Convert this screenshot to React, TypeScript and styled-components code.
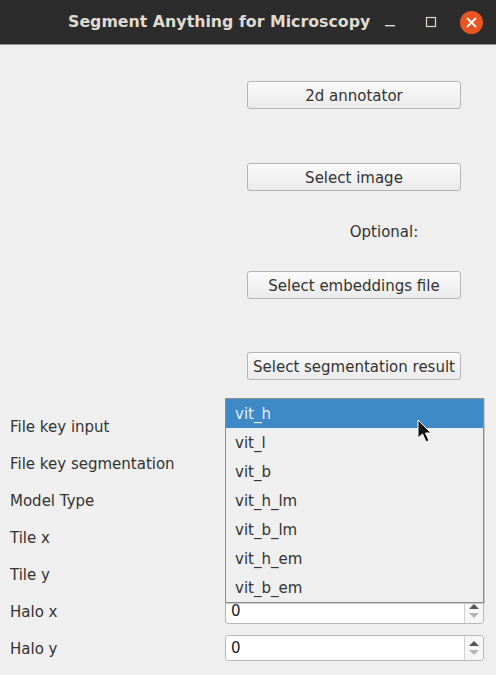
import React from "react";
import styled, { createGlobalStyle } from "styled-components";

const Global = createGlobalStyle`
  html, body { margin: 0; padding: 0; background: #efefef; }
  body { font-family: "DejaVu Sans", sans-serif; }
  * { box-sizing: border-box; }
`;

const Window = styled.div`
  width: 496px;
  height: 675px;
  background: #efefef;
  position: relative;
  overflow: hidden;
`;

const TitleBar = styled.div`
  height: 45px;
  background: #2d2c2c;
  border-bottom: 1px solid #9a9a9a;
  display: flex;
  align-items: center;
  padding-left: 68px;
  color: #dfdbd2;
`;

const Title = styled.div`
  font-family: "DejaVu Sans", sans-serif;
  font-weight: bold;
  font-size: 15.8px;
  flex: 1;
  margin-top: -1px;
  white-space: nowrap;
`;

const Controls = styled.div`
  display: flex;
  align-items: center;
  padding-right: 10px;
`;

const CtrlBtn = styled.div<{ $w: number }>`
  width: ${(p) => p.$w}px;
  height: 24px;
  display: flex;
  align-items: center;
  justify-content: center;
`;

const CloseCircle = styled.div`
  width: 23px;
  height: 23px;
  border-radius: 50%;
  background: #e95420;
  display: flex;
  align-items: center;
  justify-content: center;
`;

const Body = styled.div`
  display: grid;
  grid-template-columns: 215px 259px;
  padding: 0 12px 0 10px;
`;

const TopColumn = styled.div`
  grid-column: 2;
  display: flex;
  flex-direction: column;
  align-items: center;
  padding-top: 36px;
`;

const PushButton = styled.button<{ $mt: number }>`
  margin-top: ${(p) => p.$mt}px;
  width: 214px;
  height: 28px;
  border: 1px solid #b4b4b4;
  border-radius: 3px;
  background: linear-gradient(#fafafa, #ebebeb);
  font-family: "DejaVu Sans", sans-serif;
  font-size: 15px;
  color: #333;
  padding: 2px 0 0 0;
  white-space: nowrap;
  margin-left: -1px;
`;

const Optional = styled.div`
  margin-top: 31px;
  margin-left: 59px;
  font-size: 15px;
  color: #333;
  height: 18px;
  line-height: 20px;
`;

const Form = styled.div`
  grid-column: 1 / span 2;
  display: grid;
  grid-template-columns: 215px 259px;
  row-gap: 11px;
  margin-top: 33px;
  position: relative;
`;

const Label = styled.div`
  height: 26px;
  line-height: 28px;
  font-size: 15px;
  color: #333;
  white-space: nowrap;
`;

const Field = styled.div`
  height: 26px;
  display: flex;
  border: 1px solid #b8b8b8;
  border-radius: 3px;
  background: #fff;
  overflow: hidden;
`;

const FieldValue = styled.div`
  flex: 1;
  padding-left: 5px;
  line-height: 25px;
  font-size: 15px;
  color: #222;
`;

const Arrows = styled.div`
  width: 19px;
  border-left: 1px solid #d0d0d0;
  background: #f6f6f6;
  display: flex;
  flex-direction: column;
  align-items: center;
  justify-content: center;
  gap: 4px;
`;

const Tri = styled.div<{ $up: boolean }>`
  width: 0;
  height: 0;
  border-left: 5px solid transparent;
  border-right: 5px solid transparent;
  ${(p) =>
    p.$up
      ? "border-bottom: 5px solid #555;"
      : "border-top: 5px solid #b5b5b5;"}
`;

const Popup = styled.div`
  position: absolute;
  left: 215px;
  top: -15px;
  width: 259px;
  height: 205px;
  background: #efefef;
  border: 1px solid #8c8c8c;
  box-shadow: 1px 1px 0 #c8c8c8;
  display: flex;
  flex-direction: column;
`;

const Item = styled.div<{ $sel?: boolean }>`
  height: 29px;
  line-height: 31px;
  padding-left: 9px;
  font-size: 15px;
  color: ${(p) => (p.$sel ? "#e6eff8" : "#333")};
  background: ${(p) => (p.$sel ? "#3e8ac6" : "transparent")};
  flex-shrink: 0;
`;

const Cursor = styled.svg`
  position: absolute;
  left: 417px;
  top: 419px;
`;

const labels = [
  "File key input",
  "File key segmentation",
  "Model Type",
  "Tile x",
  "Tile y",
  "Halo x",
  "Halo y",
];

const items = ["vit_h", "vit_l", "vit_b", "vit_h_lm", "vit_b_lm", "vit_h_em", "vit_b_em"];

export default function App() {
  return (
    <Window>
      <Global />
      <TitleBar>
        <Title>Segment Anything for Microscopy</Title>
        <Controls>
          <CtrlBtn $w={40}>
            <svg width="12" height="12" viewBox="0 0 12 12">
              <rect x="1" y="9" width="10" height="1.4" fill="#dfdbd2" />
            </svg>
          </CtrlBtn>
          <CtrlBtn $w={42}>
            <svg width="12" height="12" viewBox="0 0 12 12">
              <rect x="1.5" y="1.5" width="9" height="9" fill="none" stroke="#dfdbd2" strokeWidth="1.2" />
            </svg>
          </CtrlBtn>
          <CtrlBtn $w={38}>
            <CloseCircle>
              <svg width="11" height="11" viewBox="0 0 11 11">
                <path d="M1.5 1.5 L9.5 9.5 M9.5 1.5 L1.5 9.5" stroke="#fff" strokeWidth="1.8" strokeLinecap="round" />
              </svg>
            </CloseCircle>
          </CtrlBtn>
        </Controls>
      </TitleBar>
      <Body>
        <TopColumn>
          <PushButton $mt={0}>2d annotator</PushButton>
          <PushButton $mt={54}>Select image</PushButton>
          <Optional>Optional:</Optional>
          <PushButton $mt={31}>Select embeddings file</PushButton>
          <PushButton $mt={53}>Select segmentation result</PushButton>
        </TopColumn>
        <Form>
          {labels.map((l) => (
            <React.Fragment key={l}>
              <Label>{l}</Label>
              <Field>
                <FieldValue>{l.startsWith("Halo") ? "0" : ""}</FieldValue>
                {l.startsWith("Halo") || l.startsWith("Tile") ? (
                  <Arrows>
                    <Tri $up />
                    <Tri $up={false} />
                  </Arrows>
                ) : null}
              </Field>
            </React.Fragment>
          ))}
          <Popup>
            {items.map((it, i) => (
              <Item key={it} $sel={i === 0}>
                {it}
              </Item>
            ))}
          </Popup>
        </Form>
      </Body>
      <Cursor width="16" height="26" viewBox="0 0 16 26">
        <path
          d="M1 1 L1 19 L5.5 15 L9 23 L12 21.5 L8.5 14 L14 14 Z"
          fill="#111"
          stroke="#fff"
          strokeWidth="1"
          strokeLinejoin="round"
        />
      </Cursor>
    </Window>
  );
}
